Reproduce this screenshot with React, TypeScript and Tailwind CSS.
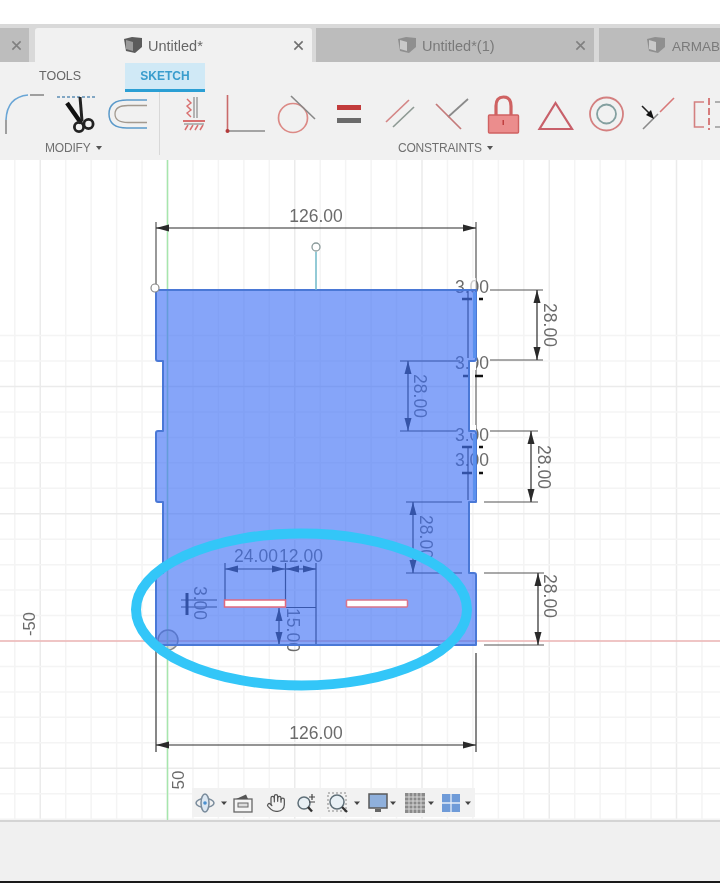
import React from "react";
import { Hand } from "lucide-react";

const FONT = "[font-family:'Liberation_Sans',Arial,sans-serif]";

function Cube({ dim }: { dim?: boolean }) {
  return (
    <svg width="20" height="18" viewBox="0 0 20 18" className="shrink-0">
      <path d="M1 3 L9 1 L19 2 L19 11 L12 17 L3 15 Z" fill={dim ? "#8f8f8f" : "#5c5c5c"} />
      <path d="M3 4 L10 6 L10 15 L3 13 Z" fill={dim ? "#c9c9c9" : "#9a9a9a"} />
    </svg>
  );
}

function X({ dim }: { dim?: boolean }) {
  return (
    <svg width="11" height="11" viewBox="0 0 12 12" className="shrink-0">
      <path d="M1.500 1.500 L10.500 10.500 M10.500 1.500 L1.500 10.500" stroke={dim ? "#808080" : "#707070"} strokeWidth="1.700" />
    </svg>
  );
}

function TabBar() {
  return (
    <div className="flex h-[38px] shrink-0 items-end bg-[#d9d9d9] pt-[4px]">
      <div className="flex h-[34px] w-[29px] shrink-0 items-center justify-end bg-[#bdbdbd] pr-[7px]">
        <X dim />
      </div>
      <div className="ml-[6px] flex h-[34px] w-[277px] shrink-0 items-center rounded-t-[3px] bg-[#f1f1f1] pl-[88px] pr-[8px]">
        <Cube />
        <span className="ml-[5px] pt-[4px] text-[14.500px] text-[#666]">Untitled*</span>
        <span className="ml-auto">
          <X />
        </span>
      </div>
      <div className="ml-[4px] flex h-[34px] w-[278px] shrink-0 items-center bg-[#bcbcbc] pl-[81px] pr-[8px]">
        <Cube dim />
        <span className="ml-[5px] pt-[4px] text-[14.500px] text-[#7a7a7a]">Untitled*(1)</span>
        <span className="ml-auto">
          <X dim />
        </span>
      </div>
      <div className="ml-[5px] flex h-[34px] min-w-0 flex-1 items-center overflow-hidden bg-[#bcbcbc] pl-[47px]">
        <Cube dim />
        <span className="ml-[6px] whitespace-nowrap pt-[4px] text-[13.500px] text-[#7a7a7a]">ARMAB</span>
      </div>
    </div>
  );
}

function ModifyIcons() {
  return (
    <svg width="159" height="46" viewBox="0 92 159 46" className="block">
      <path d="M6 134 V120" stroke="#8b8b8b" strokeWidth="1.600" fill="none" />
      <path d="M6 120 Q7 97 28 95" stroke="#6aa6d6" strokeWidth="1.600" fill="none" />
      <path d="M30 95 H44" stroke="#8b8b8b" strokeWidth="1.600" />
      <path d="M57 97 H96" stroke="#5d8fb5" strokeWidth="1.300" strokeDasharray="3 2" />
      <path d="M67 103 L81 123" stroke="#111" strokeWidth="4.400" />
      <path d="M80 97 L82 121" stroke="#222" strokeWidth="3" />
      <circle cx="79" cy="127" r="4.600" fill="none" stroke="#222" strokeWidth="2.800" />
      <circle cx="88.500" cy="124" r="4.600" fill="none" stroke="#222" strokeWidth="2.800" />
      <path d="M147 100 H127 Q109 100 109 114 Q109 128 127 128 H147" fill="none" stroke="#5b9aca" strokeWidth="1.500" />
      <path d="M147 105.500 H128 Q115 105.500 115 114 Q115 122.500 128 122.500 H147" fill="none" stroke="#a39a90" strokeWidth="1.300" />
    </svg>
  );
}

function ConstraintIcons() {
  return (
    <svg width="561" height="46" viewBox="159 92 561 46" className="block">
      <path d="M193 97 V118 M196 97 V118" stroke="#8a8a8a" strokeWidth="1.200" />
      <path d="M186 99 L190 103 L186 106 L190 110 L186 113 L190 117" stroke="#d86f6f" strokeWidth="1.400" fill="none" />
      <path d="M182 121 H204" stroke="#d86f6f" strokeWidth="2" />
      <path d="M183 124 H203" stroke="#777" strokeWidth="1" />
      <path d="M184 130 L187 125 M189 130 L192 125 M194 130 L197 125 M199 130 L202 125" stroke="#d86f6f" strokeWidth="1.500" />
      <path d="M226.500 95 V131" stroke="#c96a6a" strokeWidth="1.600" />
      <path d="M227 131 H264" stroke="#8a8a8a" strokeWidth="1.600" />
      <circle cx="226.500" cy="131" r="2" fill="#b33a3a" />
      <circle cx="292" cy="118" r="14.500" fill="none" stroke="#dc8a86" strokeWidth="1.700" />
      <path d="M290 96 L314 119" stroke="#888" strokeWidth="1.600" />
      <rect x="336" y="105" width="24" height="5" fill="#c23b3b" />
      <rect x="336" y="118" width="24" height="5" fill="#6b6b6b" />
      <path d="M385 122 L408 100" stroke="#d48585" strokeWidth="1.700" />
      <path d="M392 127 L413 107" stroke="#8e9a94" strokeWidth="1.700" />
      <path d="M467 99 L447 117" stroke="#8a8a8a" strokeWidth="1.700" />
      <path d="M435 104 L460 129" stroke="#c47a7a" strokeWidth="1.700" />
      <path d="M495 116 V106 Q495 97 502.500 97 Q510 97 510 106 V116" fill="none" stroke="#cf6262" strokeWidth="3.200" />
      <rect x="487.500" y="115" width="30" height="18" rx="1" fill="#eb8d8d" stroke="#cf6262" strokeWidth="1.400" />
      <rect x="501.500" y="120" width="1.500" height="5" fill="#c04040" />
      <path d="M554.500 103 L538.500 129 H571 Z" fill="none" stroke="#c8606a" strokeWidth="2.200" />
      <circle cx="605.500" cy="114" r="16.500" fill="none" stroke="#d48080" strokeWidth="1.800" />
      <circle cx="605.500" cy="114" r="9.500" fill="none" stroke="#84a0a0" strokeWidth="1.800" />
      <path d="M642 129 L657 114" stroke="#8a8a8a" strokeWidth="1.600" />
      <path d="M659 112 L673 98" stroke="#d87878" strokeWidth="1.600" />
      <path d="M641 106 L650 115" stroke="#222" strokeWidth="1.600" />
      <path d="M653 119 L645 115 L650 110 Z" fill="#111" />
      <path d="M703 102 H693.500 V127 H703" fill="none" stroke="#d48080" strokeWidth="1.600" />
      <path d="M708 98 V130" stroke="#d06060" strokeWidth="1.600" strokeDasharray="7 3" />
      <path d="M714 102 H720 M714 127 H720" stroke="#999" strokeWidth="1.600" />
    </svg>
  );
}

function Ribbon() {
  return (
    <div className="flex h-[98px] shrink-0 flex-col bg-[#f1f1f1]">
      <div className="flex h-[30px] shrink-0 items-start">
        <div className="w-[125px] pl-[39px] pt-[6px] text-[12.500px] leading-[16px] text-[#666]">TOOLS</div>
        <div className="mt-[1px] flex h-[29px] w-[80px] items-center justify-center border-b-[3px] border-[#2b9fd4] bg-[#d0e9f6] text-[12px] font-bold text-[#3a9dcd]">
          SKETCH
        </div>
      </div>
      <div className="flex min-h-0 flex-1">
        <div className="mb-[5px] w-[160px] shrink-0 border-r border-[#d8d8d8]">
          <ModifyIcons />
          <div className="mt-[3px] flex items-center pl-[45px] text-[12px] leading-[14px] tracking-[-0.200px] text-[#707070]">
            MODIFY
            <svg width="6" height="4" viewBox="0 0 6 4" className="ml-[6px]">
              <path d="M0 0 H6 L3 4 Z" fill="#555" />
            </svg>
          </div>
        </div>
        <div className="min-w-0 flex-1">
          <ConstraintIcons />
          <div className="mt-[3px] flex items-center pl-[238px] text-[12px] leading-[14px] tracking-[-0.200px] text-[#707070]">
            CONSTRAINTS
            <svg width="6" height="4" viewBox="0 0 6 4" className="ml-[5px]">
              <path d="M0 0 H6 L3 4 Z" fill="#555" />
            </svg>
          </div>
        </div>
      </div>
    </div>
  );
}

const DIM = "#555";
const LABEL = "#6b6b6b";

function VDim({ x, y1, y2, color = "#2a2a2a" }: { x: number; y1: number; y2: number; color?: string }) {
  return (
    <g>
      <path d={`M${x} ${y1} V${y2}`} stroke={color} strokeWidth="1.200" />
      <path d={`M${x} ${y1} L${x - 3.500} ${y1 + 13} H${x + 3.500} Z`} fill={color} />
      <path d={`M${x} ${y2} L${x - 3.500} ${y2 - 13} H${x + 3.500} Z`} fill={color} />
    </g>
  );
}

function HDim({ y, x1, x2, color = "#2a2a2a" }: { y: number; x1: number; x2: number; color?: string }) {
  return (
    <g>
      <path d={`M${x1} ${y} H${x2}`} stroke={color} strokeWidth="1.200" />
      <path d={`M${x1} ${y} L${x1 + 13} ${y - 3.500} V${y + 3.500} Z`} fill={color} />
      <path d={`M${x2} ${y} L${x2 - 13} ${y - 3.500} V${y + 3.500} Z`} fill={color} />
    </g>
  );
}

function Label({ x, y, t, rot, size = 17.500 }: { x: number; y: number; t: string; rot?: number; size?: number }) {
  return (
    <text
      x={x}
      y={y}
      fontSize={size}
      fill={LABEL}
      textAnchor="middle"
      dominantBaseline="central"
      transform={rot ? `rotate(${rot} ${x} ${y})` : undefined}
    >
      {t}
    </text>
  );
}

const OUTLINE =
  "M156 292 Q156 290 158 290 H476 V359 Q476 361 474 361 H469 V431 H474 Q476 431 476 433 V502 H469 V573 H474 Q476 573 476 575 V645 H156 V575 Q156 573 158 573 H163 V502 H158 Q156 502 156 500 V433 Q156 431 158 431 H163 V361 H158 Q156 361 156 359 Z";

function Sketch() {
  const vs = Array.from({ length: 30 }, (_, i) => i - 6);
  const hs = Array.from({ length: 20 }, (_, i) => i - 7);
  return (
    <svg viewBox="0 160 720 660" className={`block h-full w-full ${FONT}`}>
      {vs.map((k) => (
        <path
          key={k}
          d={`M${167.500 + k * 25.450} 160 V822`}
          stroke={k % 5 === 0 ? "#ebebeb" : "#f4f4f4"}
          strokeWidth="1.500"
        />
      ))}
      {hs.map((k) => (
        <path
          key={k}
          d={`M0 ${641 - k * 25.450} H720`}
          stroke={k % 5 === 0 ? "#ebebeb" : "#f4f4f4"}
          strokeWidth="1.500"
        />
      ))}
      <path d="M0 641 H720" stroke="#ee9a9a" strokeWidth="1" />
      <path d="M167.500 160 V822" stroke="#a6e6ad" strokeWidth="1.500" />
      <Label x={29} y={624} t="-50" rot={-90} size={16.500} />
      <Label x={178} y={780} t="50" rot={-90} size={17} />

      <path d="M156 222 V286 M476 222 V290" stroke={DIM} strokeWidth="1.200" />
      <HDim y={228} x1={156} x2={476} />
      <Label x={316} y={216} t="126.00" />

      <path d="M490 290 H543 M490 360 H543" stroke={DIM} strokeWidth="1.200" />
      <VDim x={537} y1={290} y2={360} />
      <Label x={550} y={325} t="28.00" rot={90} />

      <path d="M490 431 H538 M484 502 H538" stroke={DIM} strokeWidth="1.200" />
      <VDim x={531} y1={431} y2={502} />
      <Label x={544} y={467} t="28.00" rot={90} />

      <path d="M484 573 H544 M484 645 H544" stroke={DIM} strokeWidth="1.200" />
      <VDim x={538} y1={573} y2={645} />
      <Label x={550} y={596} t="28.00" rot={90} />

      <path d="M400 361 H460 M400 431 H456" stroke="#333" strokeWidth="1.200" />
      <VDim x={408} y1={361} y2={431} />
      <Label x={420} y={396} t="28.00" rot={90} />

      <path d="M406 502 H462 M406 573 H462" stroke="#333" strokeWidth="1.200" />
      <VDim x={413} y1={502} y2={573} />
      <Label x={426} y={537} t="28.00" rot={90} />

      <Label x={472} y={287} t="3.00" />
      <Label x={472} y={363} t="3.00" />
      <Label x={472} y={435} t="3.00" />
      <Label x={472} y={460} t="3.00" />
      <path d="M468 290 V358 M468 447 V500" stroke="#333" strokeWidth="1.200" />
      <path d="M476 362 V430" stroke="#666" strokeWidth="1.200" />
      <path d="M462 299 H472 M463 376 H468 M462 447 H472 M462 473 H472" stroke="#222" strokeWidth="2.500" />

      <path d="M225 563 V600 M285.500 563 V600 M316 563 V645 M286 607.500 H316" stroke="#333" strokeWidth="1.200" />
      <HDim y={569} x1={225} x2={285} />
      <HDim y={569} x1={286} x2={316} />
      <Label x={256} y={556} t="24.00" />
      <Label x={301} y={556} t="12.00" />
      <path d="M181 600 H217 M181 607 H217" stroke="#333" strokeWidth="1.200" />
      <path d="M187 593 V615" stroke="#222" strokeWidth="3" />
      <Label x={200} y={603} t="3.00" rot={90} />
      <VDim x={279} y1={608} y2={645} />
      <Label x={293} y={630} t="15.00" rot={90} />

      <circle cx="168" cy="640" r="10" fill="#9a9a9a" fillOpacity="0.350" stroke="#888" strokeWidth="1.500" />

      <path d="M156 647 V752 M476 653 V752" stroke={DIM} strokeWidth="1.400" />
      <HDim y={745} x1={156} x2={476} />
      <Label x={316} y={733} t="126.00" />

      <rect x="469" y="352" width="7" height="18" fill="#fff" />
      <rect x="469" y="425" width="7" height="8" fill="#fff" />
      <rect x="467" y="278" width="9" height="12" fill="#fff" fillOpacity="0.650" />

      <path d={OUTLINE} fill="#3c6ef5" fillOpacity="0.620" stroke="#4a78d6" strokeWidth="2" strokeLinejoin="round" />
      <path d="M474.500 292 V358 M474.500 434 V500" stroke="#5a90ee" strokeWidth="3" />

      <path d="M479 299 H483 M475 376 H483 M479 447 H483 M479 473 H483" stroke="#111" strokeWidth="2.500" />

      <path d="M316 290 V252" stroke="#6fb8c8" strokeWidth="1.500" />
      <circle cx="316" cy="247" r="4" fill="#fff" stroke="#8a9a9a" strokeWidth="1.300" />
      <circle cx="155" cy="288" r="4" fill="#fff" stroke="#8a8a8a" strokeWidth="1.200" />

      <rect x="224.500" y="600" width="61" height="7" fill="#fff" stroke="#e0687e" strokeWidth="1.500" />
      <rect x="346.500" y="600" width="61" height="7" rx="1" fill="#fff" stroke="#d9758c" strokeWidth="1.500" />

      <ellipse cx="301.500" cy="609.500" rx="165.500" ry="76" fill="none" stroke="#33c6f8" strokeWidth="10" />
    </svg>
  );
}

function Caret() {
  return (
    <svg width="10" height="6" viewBox="0 0 10 6" className="shrink-0">
      <path d="M2 1.500 H8 L5 5 Z" fill="#444" />
    </svg>
  );
}

function Toolbar() {
  return (
    <div className="absolute bottom-[3px] left-[192px] flex h-[29px] w-[283px] items-center bg-[#f2f2f2]">
      <div className="flex w-[26px] justify-center">
        <svg width="22" height="22" viewBox="0 0 22 22">
          <ellipse cx="11" cy="11" rx="9" ry="4.500" fill="none" stroke="#7a8c9c" strokeWidth="1.500" />
          <ellipse cx="11" cy="11" rx="4" ry="9" fill="#dbe7f2" stroke="#7a8c9c" strokeWidth="1.500" />
          <circle cx="11" cy="11" r="1.800" fill="#4a90d0" />
        </svg>
      </div>
      <div className="flex w-[12px] justify-center">
        <Caret />
      </div>
      <div className="flex w-[26px] justify-center">
        <svg width="20" height="20" viewBox="0 0 20 20">
          <rect x="1" y="6" width="18" height="13" fill="#f4f4f4" stroke="#666" strokeWidth="1.300" />
          <rect x="5" y="10" width="10" height="4" fill="#ddd" stroke="#666" />
          <path d="M3 6 L13 1.500 L15 6 Z" fill="#555" />
        </svg>
      </div>
      <div className="ml-[6px] flex w-[28px] justify-center">
        <Hand size={20} strokeWidth={1.500} color="#555" />
      </div>
      <div className="ml-[2px] flex w-[28px] justify-center">
        <svg width="20" height="20" viewBox="0 0 20 20">
          <circle cx="8" cy="10" r="6" fill="#e8f0f5" stroke="#5f6f78" strokeWidth="1.500" />
          <path d="M12 14 L16 18.500" stroke="#333" strokeWidth="2.400" />
          <path d="M16 1 V7 M13 4 H19 M13 9 H19" stroke="#444" strokeWidth="1.200" />
        </svg>
      </div>
      <div className="ml-[4px] flex w-[28px] justify-center">
        <svg width="22" height="22" viewBox="0 0 22 22">
          <rect x="1" y="1" width="18" height="18" fill="none" stroke="#888" strokeDasharray="2 2" />
          <circle cx="10" cy="10" r="7" fill="#e8f0f5" stroke="#5f6f78" strokeWidth="1.500" />
          <path d="M15 15 L20 20" stroke="#333" strokeWidth="2.400" />
        </svg>
      </div>
      <div className="flex w-[10px] justify-center">
        <Caret />
      </div>
      <div className="ml-[6px] flex w-[20px] justify-center">
        <svg width="20" height="20" viewBox="0 0 20 20">
          <rect x="1" y="1" width="18" height="14" fill="#8fb0dc" stroke="#5a5a5a" strokeWidth="1.500" />
          <path d="M7 16 H13 V19 H7 Z" fill="#666" />
        </svg>
      </div>
      <div className="flex w-[10px] justify-center">
        <Caret />
      </div>
      <div className="ml-[7px] flex w-[20px] justify-center">
        <svg width="20" height="20" viewBox="0 0 20 20">
          <rect x="0" y="0" width="20" height="20" fill="#8a8a8a" />
          <path
            d="M4 0 V20 M8 0 V20 M12 0 V20 M16 0 V20 M0 4 H20 M0 8 H20 M0 12 H20 M0 16 H20"
            stroke="#d6d6d6"
            strokeWidth="1"
          />
        </svg>
      </div>
      <div className="ml-[1px] flex w-[10px] justify-center">
        <Caret />
      </div>
      <div className="ml-[5px] flex w-[20px] justify-center">
        <svg width="18" height="18" viewBox="0 0 18 18">
          <rect x="0" y="0" width="18" height="18" fill="#6f9bd8" />
          <path d="M9 0 V18 M0 9 H18" stroke="#e6eef8" strokeWidth="1.300" />
        </svg>
      </div>
      <div className="ml-[2px] flex w-[10px] justify-center">
        <Caret />
      </div>
    </div>
  );
}

export default function App() {
  return (
    <div className={`flex h-[883px] w-[720px] flex-col overflow-hidden bg-white blur-[0.6px] ${FONT}`}>
      <div className="h-[24px] shrink-0 bg-white" />
      <TabBar />
      <Ribbon />
      <div className="relative min-h-0 flex-1 overflow-hidden border-b-2 border-[#d4d4d4] bg-white">
        <Sketch />
        <Toolbar />
      </div>
      <div className="h-[59px] shrink-0 bg-[#f0f0f0]" />
      <div className="h-[2px] shrink-0 bg-[#1a1a1a]" />
    </div>
  );
}
